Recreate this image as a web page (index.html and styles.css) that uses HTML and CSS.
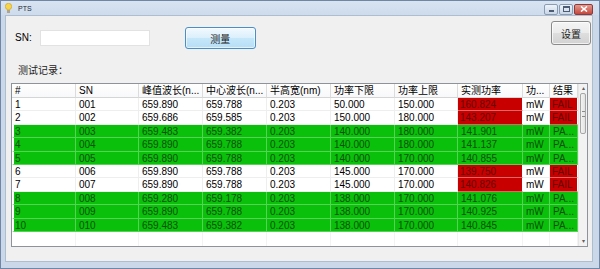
FILE: index.html
```html
<!DOCTYPE html>
<html>
<head>
  <title>PTS</title>
  <link rel="stylesheet" href="styles.css">
</head>
<body>
  <div class="window">
    <div class="titlebar">
      <svg class="app-icon" width="7" height="11" viewBox="0 0 7 11">
        <circle cx="3.5" cy="3.5" r="3.2" fill="#f7d54a" stroke="#c99a1a" stroke-width="0.6"/>
        <rect x="2" y="7" width="3" height="3" fill="#b0a48a"/>
      </svg>
      <span class="title">PTS</span>
      <div class="controls">
        <span class="ctl ctl-min"><i></i></span>
        <span class="ctl ctl-max"><i></i></span>
        <span class="ctl ctl-close">
          <svg width="8" height="6" viewBox="0 0 8 6"><path d="M1 0.5 L7 5.5 M7 0.5 L1 5.5" stroke="#fff" stroke-width="1.6"/></svg>
        </span>
      </div>
    </div>

    <div class="client">
      <div class="toolbar">
        <span class="sn-label">SN:</span>
        <input class="sn-input" type="text">
        <button class="btn btn-measure">测量</button>
        <button class="btn btn-settings">设置</button>
      </div>

      <div class="caption">测试记录：</div>

      <div class="listview">
        <div class="grid">
          <div class="row head">
            <div class="c">#</div>
            <div class="c">SN</div>
            <div class="c">峰值波长(n...</div>
            <div class="c">中心波长(n...</div>
            <div class="c">半高宽(nm)</div>
            <div class="c">功率下限</div>
            <div class="c">功率上限</div>
            <div class="c">实测功率</div>
            <div class="c">功...</div>
            <div class="c">结果</div>
          </div>

          <div class="row">
            <div class="c">1</div><div class="c">001</div><div class="c">659.890</div><div class="c">659.788</div><div class="c">0.203</div>
            <div class="c">50.000</div><div class="c">150.000</div><div class="c bad">160.824</div><div class="c">mW</div><div class="c bad">FAIL</div>
          </div>
          <div class="row">
            <div class="c">2</div><div class="c">002</div><div class="c">659.686</div><div class="c">659.585</div><div class="c">0.203</div>
            <div class="c">150.000</div><div class="c">180.000</div><div class="c bad">143.207</div><div class="c">mW</div><div class="c bad">FAIL</div>
          </div>
          <div class="row pass">
            <div class="c">3</div><div class="c">003</div><div class="c">659.483</div><div class="c">659.382</div><div class="c">0.203</div>
            <div class="c">140.000</div><div class="c">180.000</div><div class="c">141.901</div><div class="c">mW</div><div class="c">PA...</div>
          </div>
          <div class="row pass">
            <div class="c">4</div><div class="c">004</div><div class="c">659.890</div><div class="c">659.788</div><div class="c">0.203</div>
            <div class="c">140.000</div><div class="c">180.000</div><div class="c">141.137</div><div class="c">mW</div><div class="c">PA...</div>
          </div>
          <div class="row pass">
            <div class="c">5</div><div class="c">005</div><div class="c">659.890</div><div class="c">659.788</div><div class="c">0.203</div>
            <div class="c">140.000</div><div class="c">170.000</div><div class="c">140.855</div><div class="c">mW</div><div class="c">PA...</div>
          </div>
          <div class="row">
            <div class="c">6</div><div class="c">006</div><div class="c">659.890</div><div class="c">659.788</div><div class="c">0.203</div>
            <div class="c">145.000</div><div class="c">170.000</div><div class="c bad">139.750</div><div class="c">mW</div><div class="c bad">FAIL</div>
          </div>
          <div class="row">
            <div class="c">7</div><div class="c">007</div><div class="c">659.890</div><div class="c">659.788</div><div class="c">0.203</div>
            <div class="c">145.000</div><div class="c">170.000</div><div class="c bad">140.826</div><div class="c">mW</div><div class="c bad">FAIL</div>
          </div>
          <div class="row pass">
            <div class="c">8</div><div class="c">008</div><div class="c">659.280</div><div class="c">659.178</div><div class="c">0.203</div>
            <div class="c">138.000</div><div class="c">170.000</div><div class="c">141.076</div><div class="c">mW</div><div class="c">PA...</div>
          </div>
          <div class="row pass">
            <div class="c">9</div><div class="c">009</div><div class="c">659.890</div><div class="c">659.788</div><div class="c">0.203</div>
            <div class="c">138.000</div><div class="c">170.000</div><div class="c">140.925</div><div class="c">mW</div><div class="c">PA...</div>
          </div>
          <div class="row pass">
            <div class="c">10</div><div class="c">010</div><div class="c">659.483</div><div class="c">659.382</div><div class="c">0.203</div>
            <div class="c">138.000</div><div class="c">170.000</div><div class="c">140.845</div><div class="c">mW</div><div class="c">PA...</div>
          </div>

          <div class="row filler">
            <div class="c"></div><div class="c"></div><div class="c"></div><div class="c"></div><div class="c"></div>
            <div class="c"></div><div class="c"></div><div class="c"></div><div class="c"></div><div class="c"></div>
          </div>
        </div>

        <div class="scrollbar">
          <div class="sb-btn">&#9652;</div>
          <div class="sb-track">
            <div class="sb-thumb"><i></i></div>
          </div>
          <div class="sb-btn">&#9662;</div>
        </div>
      </div>
    </div>
  </div>
</body>
</html>
```

FILE: styles.css
```css
body {
  margin: 0;
  font-family: "Liberation Sans", "Noto Sans CJK SC", sans-serif;
  font-size: 10px;
  color: #000;
}

.window {
  width: 600px;
  height: 269px;
  box-sizing: border-box;
  border: 1px solid #6f86a4;
  padding: 0 6px 6px 4px;
  background: #cad8ea;
  display: flex;
  flex-direction: column;
}

/* title bar */
.titlebar {
  height: 14px;
  display: flex;
  align-items: center;
  background: linear-gradient(#d9e4f1, #cddbec);
  margin: 0 -6px 0 -4px;
  padding: 0 6px 0 4px;
}
.app-icon {
  margin: 0 4px 0 0;
}
.title {
  font-size: 7px;
  color: #1e2a3a;
  margin-left: 2px;
}
.controls {
  margin-left: auto;
  display: flex;
  gap: 1px;
  margin-top: 2px;
}
.ctl {
  height: 9px;
  border: 1px solid #8a9cb4;
  border-radius: 2px;
  background: linear-gradient(#eef3f9, #c8d6e6);
  display: flex;
  align-items: center;
  justify-content: center;
}
.ctl-min, .ctl-max {
  width: 12px;
}
.ctl-min i {
  width: 5px;
  height: 2px;
  background: #4c5c74;
  margin-top: 4px;
}
.ctl-max i {
  width: 5px;
  height: 3px;
  border: 1px solid #4c5c74;
  border-top-width: 2px;
}
.ctl-close {
  width: 17px;
  border-color: #8c3b3b;
  background: linear-gradient(#e49a8f, #c5473a);
}

/* client area */
.client {
  flex: 1;
  background: #f0f0f0;
  border: 1px solid #aebdd0;
  display: flex;
  flex-direction: column;
}

.toolbar {
  height: 34px;
  display: flex;
  align-items: flex-start;
}
.sn-label {
  margin: 15px 0 0 9px;
  line-height: 14px;
  font-size: 10px;
}
.sn-input {
  margin: 14px 0 0 8px;
  width: 110px;
  height: 16px;
  box-sizing: border-box;
  border: 1px solid #e2e2e2;
  background: #fff;
  padding: 0;
}
.btn {
  font-family: "Liberation Sans", "Noto Sans CJK SC", sans-serif;
  font-size: 10px;
  color: #222;
  border-radius: 3px;
  padding: 0;
  box-sizing: border-box;
}
.btn-measure {
  margin: 11px 0 0 35px;
  width: 71px;
  height: 22px;
  border: 1px solid #4a8ec5;
  background: linear-gradient(#f1f9fe, #dbeffc 50%, #c6e7fa 51%, #b6def6);
  box-shadow: inset 0 0 0 1px rgba(255, 255, 255, 0.6);
}
.btn-settings {
  margin: 5px 1px 0 auto;
  width: 40px;
  height: 24px;
  border: 1px solid #8a8a8a;
  background: linear-gradient(#f4f4f4, #ebebeb 50%, #dedede 51%, #d2d2d2);
  box-shadow: inset 0 0 0 1px rgba(255, 255, 255, 0.7);
}

.caption {
  margin: 14px 0 0 12px;
  line-height: 14px;
  color: #222;
}

/* list view */
.listview {
  margin: 5px 0 0 5px;
  width: 577px;
  height: 164px;
  box-sizing: border-box;
  border: 1px solid #8d939c;
  background: #fff;
  display: flex;
}
.grid {
  width: 566px;
  display: flex;
  flex-direction: column;
}
.row {
  display: grid;
  grid-template-columns: 64px 63px 64px 64px 64px 64px 63px 65px 27px 28px;
  height: 13.4px;
}
.row .c {
  box-sizing: border-box;
  padding-left: 3px;
  line-height: 13px;
  white-space: nowrap;
  overflow: hidden;
  border-right: 1px solid #eeeeee;
  border-bottom: 1px solid #eeeeee;
}
.row:not(.head) .c:first-child {
  border-left: 2px solid #fff;
  padding-left: 1px;
}

.head {
  height: 14px;
  background: linear-gradient(#ffffff, #f7f8fa);
}
.head .c {
  border-right-color: #dcdcdc;
  border-bottom-color: #d5d5d5;
}

.pass .c {
  background: #0bc00b;
  color: #085008;
  border-right-color: rgba(255, 255, 255, 0.3);
  border-bottom-color: rgba(255, 255, 255, 0.3);
}
.row .bad {
  background: #c80000;
  color: #660000;
  padding-left: 2px;
  border-right-color: #fff;
  border-bottom-color: rgba(255, 255, 255, 0.4);
}

.filler {
  flex: 1;
}
.filler .c {
  border-bottom: none;
  border-right-color: #f3f3f3;
}

/* scrollbar */
.scrollbar {
  width: 9px;
  display: flex;
  flex-direction: column;
  background: #f2f2f2;
  border-left: 1px solid #e6e6e6;
}
.sb-btn {
  height: 9px;
  font-size: 6px;
  line-height: 9px;
  text-align: center;
  color: #606060;
}
.sb-track {
  flex: 1;
}
.sb-thumb {
  height: 39px;
  margin: 0 1px;
  border: 1px solid #a6a6a6;
  border-radius: 2px;
  background: linear-gradient(90deg, #f3f3f3, #e2e2e2);
  display: flex;
  align-items: center;
  justify-content: center;
}
.sb-thumb i {
  width: 3px;
  height: 4px;
  border-top: 1px solid #8a8a8a;
  border-bottom: 1px solid #8a8a8a;
}
```
